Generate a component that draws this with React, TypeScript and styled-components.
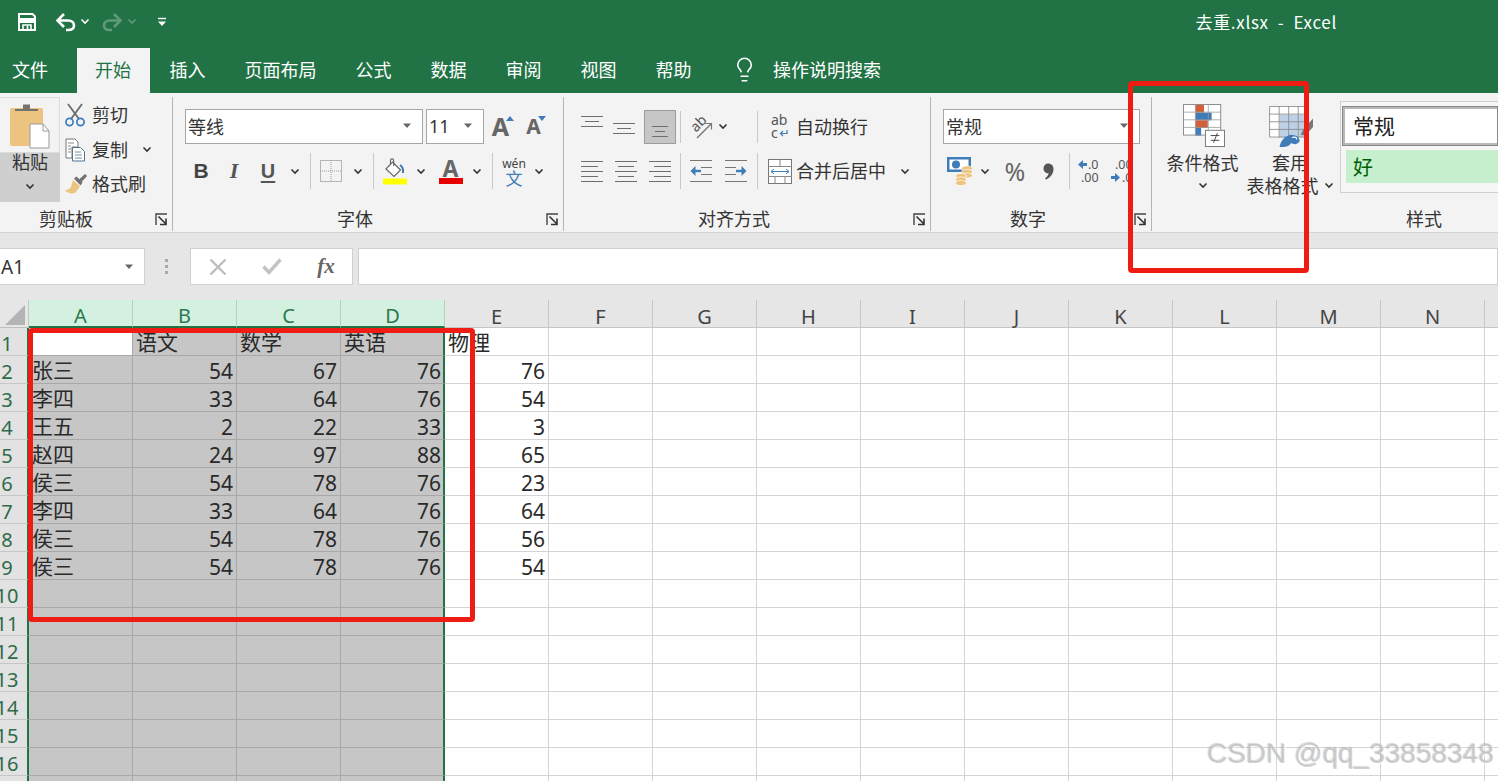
import React from "react";
import styled, { createGlobalStyle } from "styled-components";
import { Lightbulb } from "lucide-react";

const Global = createGlobalStyle`
  html, body { margin: 0; padding: 0; background: #fff; overflow: hidden; }
  body { font-family: "Noto Sans CJK SC", "Noto Sans", sans-serif; }
`;

const GREEN = "#217346";
const INK = "#333";
const BLUE = "#3f7cb8";
const CJK = `"Noto Sans CJK SC", sans-serif`;
const LATIN = `"Noto Sans", "Noto Sans CJK SC", sans-serif`;

const Page = styled.div`
  position: relative;
  width: 1498px;
  height: 781px;
  overflow: hidden;
  display: flex;
  flex-direction: column;
`;

/* title bar */
const TitleBar = styled.header`
  height: 48px;
  flex: none;
  background: ${GREEN};
  display: flex;
  align-items: center;
  padding: 0 161px 5px 17px;
  box-sizing: border-box;
`;
const Quick = styled.span<{ $ml?: number; $dim?: boolean }>`
  display: inline-flex;
  margin-left: ${(p) => p.$ml ?? 0}px;
  opacity: ${(p) => (p.$dim ? 0.28 : 1)};
`;
const Title = styled.div`
  margin-left: auto;
  color: #fff;
  font-size: 17px;
  letter-spacing: 0.7px;
  white-space: pre;
  font-family: ${CJK};
`;

/* tabs */
const Tabs = styled.nav`
  height: 45px;
  flex: none;
  background: ${GREEN};
  display: flex;
  align-items: stretch;
  padding-left: 12px;
`;
const Tab = styled.div<{ $active?: boolean; $first?: boolean }>`
  display: flex;
  align-items: center;
  padding: ${(p) => (p.$first ? "0 29px 0 0" : p.$active ? "0 19px 0 18px" : "0 19.5px")};
  background: ${(p) => (p.$active ? "#f3f3f3" : "transparent")};
  color: ${(p) => (p.$active ? GREEN : "#fff")};
  font-size: 18px;
  padding-bottom: 3px;
  white-space: nowrap;
`;
const Search = styled.div`
  display: flex;
  align-items: center;
  gap: 15px;
  margin-left: 20px;
  color: #fff;
  font-size: 18px;
  padding-bottom: 3px;
  white-space: nowrap;
`;

/* ribbon */
const Ribbon = styled.section`
  height: 140px;
  flex: none;
  box-sizing: border-box;
  background: #f3f3f3;
  border-bottom: 1px solid #d4d4d4;
  display: flex;
  overflow: hidden;
  color: ${INK};
`;
const Group = styled.div<{ $w: number; $last?: boolean }>`
  width: ${(p) => p.$w}px;
  flex: none;
  box-sizing: border-box;
  height: 134px;
  margin-top: 4px;
  display: flex;
  flex-direction: column;
  border-right: ${(p) => (p.$last ? "none" : "1px solid #b4b4b4")};
`;
const GroupBody = styled.div`
  flex: 1;
  min-height: 0;
`;
const GroupBodyRow = styled.div`
  flex: 1;
  min-height: 0;
  display: flex;
`;
const LabelRow = styled.div<{ $left: number }>`
  height: 26px;
  flex: none;
  display: flex;
  align-items: center;
  padding-left: ${(p) => p.$left}px;
  padding-right: 4px;
  font-size: 18px;
  white-space: nowrap;
`;
const LauncherBox = styled.span`
  margin-left: auto;
  display: inline-flex;
  margin-top: 3px;
`;
const Row = styled.div<{ $top: number; $left: number; $h?: number }>`
  display: flex;
  align-items: center;
  height: ${(p) => p.$h ?? 35}px;
  margin-top: ${(p) => p.$top}px;
  padding-left: ${(p) => p.$left}px;
`;
const Slot = styled.span<{ $w: number; $ml?: number }>`
  flex: none;
  width: ${(p) => p.$w}px;
  margin-left: ${(p) => p.$ml ?? 0}px;
  display: inline-flex;
  justify-content: center;
  align-items: center;
`;
const ActiveSlot = styled(Slot)`
  height: 34px;
  background: #c6c6c6;
  border: 1px solid #9c9c9c;
  box-sizing: border-box;
`;
const Sep = styled.span<{ $ml?: number }>`
  flex: none;
  width: 1px;
  height: 32px;
  background: #c8c8c8;
  margin-left: ${(p) => p.$ml ?? 0}px;
`;
const Tall = styled(Sep)`
  height: 36px;
`;
const RowText = styled.span<{ $ml?: number }>`
  font-size: 18px;
  white-space: nowrap;
  margin-left: ${(p) => p.$ml ?? 0}px;
  margin-top: -2px;
`;
const Combo = styled.div<{ $w: number; $ml?: number }>`
  width: ${(p) => p.$w}px;
  margin-left: ${(p) => p.$ml ?? 0}px;
  height: 35px;
  box-sizing: border-box;
  background: #fff;
  border: 1px solid #a6a6a6;
  display: flex;
  align-items: center;
  justify-content: space-between;
  padding: 0 10px 2px 2px;
  font-size: 18px;
  flex: none;
`;
const ComboNum = styled.span`
  font-family: ${LATIN};
`;
const GrowA = styled.span<{ $size: number }>`
  font-family: ${LATIN};
  font-weight: 700;
  font-size: ${(p) => p.$size}px;
  color: #666;
  line-height: 1;
`;
const Tri = styled.span<{ $down?: boolean }>`
  width: 0;
  height: 0;
  border-left: 4px solid transparent;
  border-right: 4px solid transparent;
  ${(p) => (p.$down ? `border-top: 5px solid ${BLUE};` : `border-bottom: 5px solid ${BLUE};`)}
  margin-bottom: 16px;
  margin-left: -3px;
`;
const FontB = styled.span`
  font-family: "Liberation Sans", sans-serif;
  font-weight: 700;
  font-size: 21px;
  color: #444;
`;
const FontI = styled.span`
  font-family: "Liberation Serif", serif;
  font-style: italic;
  font-weight: 700;
  font-size: 22px;
  color: #555;
`;
const FontU = styled.span`
  font-family: "Liberation Sans", sans-serif;
  font-size: 20px;
  font-weight: 700;
  color: #555;
  text-decoration: underline;
  text-underline-offset: 3px;
  text-decoration-thickness: 1.5px;
`;
const ColorA = styled.span<{ $bar: string }>`
  display: inline-flex;
  flex-direction: column;
  align-items: center;
  font-family: ${LATIN};
  font-weight: 700;
  font-size: 23px;
  line-height: 20px;
  color: #666;
  &::after {
    content: "";
    width: 24px;
    height: 6px;
    background: ${(p) => p.$bar};
  }
`;
const Phonetic = styled.span`
  display: inline-flex;
  flex-direction: column;
  align-items: center;
  color: ${BLUE};
  font-size: 17px;
  line-height: 15px;
`;
const PhoneticTop = styled.span`
  font-family: ${LATIN};
  font-size: 12px;
  line-height: 12px;
  color: #444;
`;
const Percent = styled.span`
  font-family: ${LATIN};
  font-size: 25px;
  color: #666;
`;

/* clipboard */
const ClipRow = styled.div`
  flex: 1;
  display: flex;
`;
const Paste = styled.div`
  width: 60px;
  height: 105px;
  flex: none;
  display: flex;
  flex-direction: column;
  box-sizing: border-box;
`;
const PasteTop = styled.div`
  height: 56px;
  flex: none;
  box-sizing: border-box;
  border: 1px solid #dcdcdc;
  border-left: none;
  display: flex;
  justify-content: center;
  padding-top: 5px;
`;
const PasteBottom = styled.div`
  flex: 1;
  background: #cfcfcf;
  display: flex;
  flex-direction: column;
  align-items: center;
  font-size: 18px;
  line-height: 22px;
  gap: 11px;
`;
const PasteLabel = styled.span`
  margin-top: -3px;
`;
const ClipList = styled.div`
  display: flex;
  flex-direction: column;
  margin-top: 1px;
`;
const ClipItem = styled.div`
  height: 34.5px;
  display: flex;
  align-items: center;
  font-size: 18px;
  white-space: nowrap;
`;

/* styles group */
const BigBtn = styled.div<{ $w: number; $ml?: number }>`
  width: ${(p) => p.$w}px;
  margin-left: ${(p) => p.$ml ?? 0}px;
  flex: none;
  display: flex;
  flex-direction: column;
  align-items: center;
  font-size: 18px;
  line-height: 23px;
  white-space: nowrap;
  padding-top: 7px;
`;
const BigIcon = styled.div<{ $ml: number }>`
  height: 44px;
  display: flex;
  align-items: flex-end;
  margin: 0 0 3px ${(p) => p.$ml}px;
`;
const CaretLine = styled.div`
  height: 23px;
  display: flex;
  align-items: center;
  gap: 5px;
`;
const Gallery = styled.div`
  flex: 1;
  margin: 4px 0 0 5px;
  height: 92px;
  box-sizing: border-box;
  border: 1px solid #d0d0d0;
  border-right: none;
  background: #f6f6f6;
  padding: 4px 0 0 1px;
  display: flex;
  flex-direction: column;
`;
const StyleNormal = styled.div`
  height: 40px;
  box-sizing: border-box;
  background: #fff;
  border: 3px solid #b8b8b8;
  outline: 1px solid #888;
  outline-offset: -1px;
  border-right: none;
  font-size: 21px;
  display: flex;
  align-items: center;
  padding: 0 0 2px 8px;
  color: #222;
`;
const StyleGood = styled.div`
  height: 33px;
  margin: 4px 0 0 4px;
  background: #c6efce;
  color: #006100;
  font-size: 20px;
  display: flex;
  align-items: center;
  padding-left: 7px;
`;

/* formula bar */
const FormulaStrip = styled.div`
  height: 67px;
  flex: none;
  box-sizing: border-box;
  background: #e6e6e6;
  padding-top: 15px;
  display: flex;
  align-items: flex-start;
`;
const FBox = styled.div<{ $w?: number; $ml?: number }>`
  height: 37px;
  box-sizing: border-box;
  width: ${(p) => (p.$w ? `${p.$w}px` : "auto")};
  flex: ${(p) => (p.$w ? "none" : "1")};
  margin-left: ${(p) => p.$ml ?? 0}px;
  background: #fff;
  border: 1px solid #d0d0d0;
  display: flex;
  align-items: center;
`;
const NameBox = styled(FBox)`
  border-left: none;
  justify-content: space-between;
  font-family: ${LATIN};
  font-size: 19px;
  padding: 0 10px 0 1px;
  color: #333;
`;
const Dots = styled.div`
  margin-left: 20px;
  width: 3px;
  height: 37px;
  flex: none;
  display: flex;
  flex-direction: column;
  justify-content: center;
  gap: 3px;
  span {
    display: block;
    height: 3px;
    background: #a8a8a8;
  }
`;
const Fx = styled.span`
  font-family: "Liberation Serif", serif;
  font-style: italic;
  font-weight: 700;
  font-size: 21px;
  color: #666;
`;

/* sheet */
const Sheet = styled.div`
  display: grid;
  grid-template-columns: 29px repeat(15, 104px);
  grid-auto-rows: 28px;
  flex: none;
`;
const Corner = styled.div`
  background: #e6e6e6;
  border-right: 1px solid #c6c6c6;
  border-bottom: 1px solid #bdbdbd;
  box-sizing: border-box;
  display: flex;
  align-items: flex-end;
  justify-content: flex-end;
  padding: 0 3px 2px 0;
`;
const ColHead = styled.div<{ $sel?: boolean }>`
  box-sizing: border-box;
  background: ${(p) => (p.$sel ? "#d3f0e0" : "#e6e6e6")};
  color: ${(p) => (p.$sel ? "#2b7a50" : "#444")};
  border-right: 1px solid ${(p) => (p.$sel ? "#b5cfc0" : "#c6c6c6")};
  border-bottom: ${(p) => (p.$sel ? `2px solid ${GREEN}` : "1px solid #c6c6c6")};
  font-family: ${LATIN};
  font-size: 20px;
  display: flex;
  align-items: center;
  justify-content: center;
  padding-top: 5px;
`;
const RowHead = styled.div`
  box-sizing: border-box;
  background: #e2e2e2;
  color: #2f6b4a;
  border-right: 2px solid ${GREEN};
  border-bottom: 1px solid #c6c6c6;
  font-family: ${LATIN};
  font-size: 20px;
  display: flex;
  align-items: center;
  justify-content: center;
  padding-right: 13px;
  padding-top: 3px;
  overflow: visible;
  white-space: nowrap;
`;
const Cell = styled.div<{ $sel?: boolean; $white?: boolean; $num?: boolean; $edge?: boolean }>`
  box-sizing: border-box;
  background: ${(p) => (p.$sel && !p.$white ? "#c6c6c6" : "#fff")};
  border-right: ${(p) =>
    p.$edge ? `2px solid ${GREEN}` : `1px solid ${p.$sel ? "#a8a8a8" : "#d4d4d4"}`};
  border-bottom: 1px solid ${(p) => (p.$sel ? "#a8a8a8" : "#d4d4d4")};
  font-family: ${(p) => (p.$num ? LATIN : CJK)};
  font-size: 21px;
  color: #2a2a2a;
  display: flex;
  align-items: center;
  justify-content: ${(p) => (p.$num ? "flex-end" : "flex-start")};
  padding: ${(p) => (p.$num ? `4px ${p.$edge ? 2 : 3}px 0 0` : "0 0 0 3px")};
  white-space: nowrap;
  overflow: visible;
  line-height: 1;
`;

/* annotations lying over the screenshot */
const RedBox = styled.div<{ $x: number; $y: number; $w: number; $h: number }>`
  position: absolute;
  left: ${(p) => p.$x}px;
  top: ${(p) => p.$y}px;
  width: ${(p) => p.$w}px;
  height: ${(p) => p.$h}px;
  box-sizing: border-box;
  border: 5px solid #ee1c12;
  border-radius: 4px;
  pointer-events: none;
`;
const Watermark = styled.div`
  position: absolute;
  right: 4px;
  top: 738px;
  font-family: "Liberation Sans", sans-serif;
  font-size: 28px;
  color: rgba(190, 190, 190, 0.7);
  text-shadow: -1px -1px 1px rgba(140, 140, 140, 0.35), 1px 1px 1px rgba(255, 255, 255, 0.9);
  white-space: nowrap;
`;

/* icons */
const Caret = ({ c = "#333", o = 1 }: { c?: string; o?: number }) => (
  <svg width="10" height="7" viewBox="0 0 10 7" opacity={o}>
    <path d="M1.5 1.5 5 5l3.5-3.5" fill="none" stroke={c} strokeWidth="1.6" />
  </svg>
);
const DropTri = () => (
  <svg width="10" height="6" viewBox="0 0 10 6">
    <path d="M1 0.5h8L5 5z" fill="#666" />
  </svg>
);
const SaveIcon = () => (
  <svg width="20" height="20" viewBox="0 0 20 20" fill="none">
    <path d="M2 2h13.5L18 4.5V18H2z" stroke="#fff" strokeWidth="2" />
    <path d="M2 8.5h16" stroke="#fff" strokeWidth="5" />
    <path d="M6 18v-5h8v5M10.5 14v3" stroke="#fff" strokeWidth="1.6" />
  </svg>
);
const Undo = ({ flip }: { flip?: boolean }) => (
  <svg width="22" height="20" viewBox="0 0 22 20" fill="none" style={flip ? { transform: "scaleX(-1)" } : undefined}>
    <path d="M2.5 8.5H13c4 0 6 2.3 6 5s-2 4.5-6 4.5h-2" stroke="#fff" strokeWidth="2.6" />
    <path d="M9 2 2.5 8.5 9 15" stroke="#fff" strokeWidth="2.6" />
  </svg>
);
const Customize = () => (
  <svg width="10" height="10" viewBox="0 0 10 10">
    <path d="M1 1.5h8" stroke="#fff" strokeWidth="1.4" />
    <path d="M1 4.5h8L5 9z" fill="#fff" />
  </svg>
);
const PasteIcon = () => (
  <svg width="42" height="46" viewBox="0 0 42 46">
    <rect x="1" y="5" width="33" height="38" rx="2" fill="#edc47f" />
    <path d="M6 8V6h8V1.5h7V6h8v2z" fill="#76726d" />
    <path d="M21 21h13l6 7v17H21z" fill="#fff" stroke="#9a9a9a" />
    <path d="M34 21v7h6" fill="none" stroke="#9a9a9a" />
  </svg>
);
const Scissors = () => (
  <svg width="22" height="24" viewBox="0 0 22 24" fill="none">
    <path d="M4 1 15 16M18 1 7 16" stroke="#6b6b6b" strokeWidth="1.8" />
    <circle cx="5.5" cy="19" r="3.6" stroke={BLUE} strokeWidth="1.7" />
    <circle cx="16.5" cy="19" r="3.6" stroke={BLUE} strokeWidth="1.7" />
  </svg>
);
const CopyIcon = () => (
  <svg width="21" height="24" viewBox="0 0 21 24" fill="none">
    <path d="M1 1h9l3 3v5H7v11H1z" stroke="#777" fill="#fff" />
    <path d="M3 5h6M3 8h3M3 11h3M3 14h3" stroke="#8b8b8b" />
    <path d="M7.5 9.5h8l4 4v9.5h-12z" stroke="#55728f" fill="#fff" />
    <path d="M10 14h6M10 17h7M10 20h7" stroke="#7d8ea0" />
  </svg>
);
const BrushIcon = () => (
  <svg width="24" height="22" viewBox="0 0 24 22">
    <path d="M9 7 16 13.500 11 20C7 21 3 20 1 17c3 0 5-1 6-3z" fill="#edc47f" />
    <path d="M10 5.500 12.500 3.500 18.500 9.500 16.500 12.500z" fill="#6f6f6f" />
    <path d="M15 6.500 21 1l2 2-5.500 6z" fill="#6f6f6f" />
  </svg>
);
const Launcher = () => (
  <svg width="13" height="13" viewBox="0 0 13 13" fill="none">
    <path d="M1 12V1h11" stroke="#444" strokeWidth="1.4" />
    <path d="M3.5 3.5 11 11M11 5.5V11.5H5" stroke="#333" strokeWidth="1.6" />
  </svg>
);
const BorderIcon = () => (
  <svg width="22" height="22" viewBox="0 0 22 22" fill="none">
    <rect x="0.5" y="0.5" width="21" height="21" stroke="#777" strokeDasharray="1 1" />
    <path d="M11 0v22M0 11h22" stroke="#999" strokeDasharray="1 1" />
  </svg>
);
const FillIcon = () => (
  <svg width="26" height="27" viewBox="0 0 26 27" fill="none">
    <path d="M10.5 4 18.5 12 12 18.5 4 11z" fill="#fff" stroke="#666" strokeWidth="1.2" />
    <path d="M8.5 6V2.5a1.6 1.6 0 0 1 3.2 0V8" stroke="#666" strokeWidth="1.1" />
    <path d="M18 7c2.500 1.500 3.500 4 3 8" stroke={BLUE} strokeWidth="2" />
    <rect x="1" y="20.500" width="24" height="6" fill="#ffff00" />
  </svg>
);
const AlignLines = ({ rows }: { rows: [number, number, number][] }) => (
  <svg width="24" height="32" viewBox="0 0 24 32" fill="none">
    {rows.map(([x1, x2, y], i) => (
      <path key={i} d={`M${x1} ${y}.5H${x2}`} stroke="#6e6e6e" />
    ))}
  </svg>
);
const Orient = () => (
  <svg width="26" height="26" viewBox="0 0 26 26" fill="none" style={{ overflow: "visible" }}>
    <text x="9" y="14" fontSize="14" textAnchor="middle" fill="#555" fontFamily="Noto Sans, sans-serif" transform="rotate(-45 9 10)">ab</text>
    <path d="M7 24 21 10" stroke="#777" strokeWidth="1.5" />
    <path d="M15.500 9.500h6v6" stroke="#777" strokeWidth="1.2" />
  </svg>
);
const WrapIcon = () => (
  <svg width="20" height="28" viewBox="0 0 20 28" fill="none" style={{ overflow: "visible" }}>
    <text x="1" y="12" fontSize="14" fill="#555" fontFamily="Noto Sans, sans-serif">ab</text>
    <text x="1" y="25" fontSize="14" fill="#555" fontFamily="Noto Sans, sans-serif">c</text>
    <path d="M17 17v3.500h-6M13 18l-2.500 2.500 2.500 2.500" stroke={BLUE} strokeWidth="1.2" />
  </svg>
);
const Indent = ({ right }: { right?: boolean }) => (
  <svg width="24" height="24" viewBox="0 0 24 24" fill="none" style={right ? { transform: "scaleX(-1)" } : undefined}>
    <path d="M1 1.500h22M12 8.500h11M12 15.500h11M1 22.500h22" stroke="#777" />
    <path d="M12 12H5" stroke={BLUE} strokeWidth="2.400" />
    <path d="M6.500 7 1.500 12l5 5z" fill={BLUE} />
  </svg>
);
const MergeIcon = () => (
  <svg width="24" height="25" viewBox="0 0 24 25" fill="none">
    <rect x="0.500" y="0.500" width="23" height="24" fill="#fff" stroke="#777" />
    <path d="M0 7.500h24M0 17.500h24M12 0v7M7 18v7M17 18v7" stroke="#888" />
    <path d="M3 12.500h18" stroke={BLUE} />
    <path d="M6 10 3 12.500 6 15M18 10l3 2.500L18 15" stroke={BLUE} />
  </svg>
);
const Currency = () => (
  <svg width="26" height="30" viewBox="0 0 26 30">
    <rect x="0" y="1" width="24" height="15" fill="#3f7cb8" />
    <rect x="2.500" y="3.500" width="19" height="10" fill="#fff" />
    <circle cx="9" cy="8.500" r="4" fill="#3f7cb8" />
    <g fill="#edc47f" stroke="#fff" strokeWidth=".6">
      <ellipse cx="20" cy="12.500" rx="5.500" ry="2.600" />
      <ellipse cx="20" cy="16" rx="5.500" ry="2.600" />
      <ellipse cx="20" cy="19.500" rx="5.500" ry="2.600" />
      <ellipse cx="14" cy="20" rx="5.500" ry="2.600" />
      <ellipse cx="14" cy="23.500" rx="5.500" ry="2.600" />
      <ellipse cx="14" cy="27" rx="5.500" ry="2.600" />
    </g>
  </svg>
);
const CommaIcon = () => (
  <svg width="11" height="17" viewBox="0 0 11 17">
    <path d="M5 0.500c3.500 0 5.500 2.300 5.500 5.500 0 4.500-3 8.500-7.500 10.500L2 15.500c2-1.500 3.300-3.200 3.700-5.200C2.800 10.500.500 8.500.500 5.500.500 2.500 2.500.500 5 .500z" fill="#555" />
  </svg>
);
const DecInc = () => (
  <svg width="24" height="26" viewBox="0 0 24 26" style={{ overflow: "visible" }}>
    <path d="M0 6.500 5 2v3h4v3H5v3z" fill={BLUE} />
    <text x="10" y="11" fontSize="12.500" fill="#555" fontFamily="Noto Sans, sans-serif">.0</text>
    <text x="3" y="24" fontSize="12.500" fill="#555" fontFamily="Noto Sans, sans-serif">.00</text>
  </svg>
);
const DecDec = () => (
  <svg width="24" height="26" viewBox="0 0 24 26" style={{ overflow: "visible" }}>
    <text x="4" y="11" fontSize="12.500" fill="#555" fontFamily="Noto Sans, sans-serif">.00</text>
    <path d="M9 19.500 4 15v3H0v3h4v3z" fill={BLUE} />
    <text x="11" y="24" fontSize="12.500" fill="#555" fontFamily="Noto Sans, sans-serif">.0</text>
  </svg>
);
const CondIcon = () => (
  <svg width="42" height="44" viewBox="0 0 44 46" fill="none">
    <rect x="0.500" y="0.500" width="39" height="32" fill="#fff" />
    <rect x="13" y="1" width="9" height="8" fill="#d0603c" />
    <rect x="13" y="9" width="17" height="8" fill="#3f7cb8" />
    <rect x="13" y="17" width="13" height="8" fill="#d0603c" />
    <rect x="13" y="25" width="6" height="8" fill="#3f7cb8" />
    <rect x="0.500" y="0.500" width="39" height="32" stroke="#8a8a8a" />
    <path d="M0 8.500h40M0 16.500h40M0 24.500h40M13 0v33M26.500 0v33" stroke="#9a9a9a" strokeWidth=".8" />
    <rect x="23.500" y="27.500" width="20" height="17" fill="#fff" stroke="#777" />
    <path d="M29 33h9M29 38h9M36 30.500l-4 10" stroke="#444" />
  </svg>
);
const TableIcon = () => (
  <svg width="46" height="42" viewBox="0 0 48 44" fill="none">
    <rect x="0.500" y="0.500" width="40" height="32" fill="#fff" />
    <rect x="11" y="9" width="30" height="24" fill="#bcd0e6" />
    <path d="M0.500 0.500h40v32h-40zM0 8.500h41M0 16.500h41M0 24.500h41M10.500 0v33M20.500 0v33M30.500 0v33" stroke="#8a8a8a" strokeWidth=".9" />
    <path d="M46 13 36 24l-3 6 5 1 8-9z" fill="#777" />
    <path d="M11 43c1-7 6-12 12-13 5 0 9 3 9 6 0 2-2 4-5 4-2 0-4-2-5 0-1 2-5 3-11 3z" fill="#3f7cb8" />
    <path d="M24 33c3-1 5 0 5 2" stroke="#fff" strokeWidth="1.200" />
  </svg>
);
const CloseX = () => (
  <svg width="18" height="18" viewBox="0 0 18 18"><path d="M1.500 1.500l15 15M16.500 1.500l-15 15" stroke="#bdbdbd" strokeWidth="2.400" /></svg>
);
const Check = () => (
  <svg width="20" height="17" viewBox="0 0 20 17"><path d="M1.500 8.500l5.500 6L18.500 1.500" fill="none" stroke="#c4c4c4" strokeWidth="3.400" /></svg>
);
const CornerTri = () => (
  <svg width="20" height="20" viewBox="0 0 20 20"><path d="M20 0v20H0z" fill="#b4b4b4" /></svg>
);

const COLS = "ABCDEFGHIJKLMNO".split("");
const DATA: string[][] = [
  ["", "语文", "数学", "英语", "物理"],
  ["张三", "54", "67", "76", "76"],
  ["李四", "33", "64", "76", "54"],
  ["王五", "2", "22", "33", "3"],
  ["赵四", "24", "97", "88", "65"],
  ["侯三", "54", "78", "76", "23"],
  ["李四", "33", "64", "76", "64"],
  ["侯三", "54", "78", "76", "56"],
  ["侯三", "54", "78", "76", "54"],
];
const ROW_COUNT = 17;
const TAB_NAMES = ["插入", "页面布局", "公式", "数据", "审阅", "视图", "帮助"];

const isNum = (v: string) => /^\d+$/.test(v);

export default function App() {
  return (
    <Page>
      <Global />
      <TitleBar>
        <Quick><SaveIcon /></Quick>
        <Quick $ml={18}><Undo /></Quick>
        <Quick $ml={3}><Caret c="#fff" /></Quick>
        <Quick $ml={11} $dim><Undo flip /></Quick>
        <Quick $ml={4} $dim><Caret c="#fff" /></Quick>
        <Quick $ml={20}><Customize /></Quick>
        <Title>去重.xlsx  -  Excel</Title>
      </TitleBar>
      <Tabs>
        <Tab $first>文件</Tab>
        <Tab $active>开始</Tab>
        {TAB_NAMES.map((t) => <Tab key={t}>{t}</Tab>)}
        <Search><Lightbulb size={27} strokeWidth={1.4} />操作说明搜索</Search>
      </Tabs>
      <Ribbon>
        <Group $w={173}>
          <ClipRow>
            <Paste>
              <PasteTop><PasteIcon /></PasteTop>
              <PasteBottom><PasteLabel>粘贴</PasteLabel><Caret /></PasteBottom>
            </Paste>
            <ClipList>
              <ClipItem><Slot $w={22} $ml={4}><Scissors /></Slot><RowText $ml={6}>剪切</RowText></ClipItem>
              <ClipItem><Slot $w={22} $ml={4}><CopyIcon /></Slot><RowText $ml={6}>复制</RowText><Slot $w={10} $ml={14}><Caret /></Slot></ClipItem>
              <ClipItem><Slot $w={24} $ml={4}><BrushIcon /></Slot><RowText $ml={4}>格式刷</RowText></ClipItem>
            </ClipList>
          </ClipRow>
          <LabelRow $left={39}>剪贴板<LauncherBox><Launcher /></LauncherBox></LabelRow>
        </Group>

        <Group $w={391}>
          <GroupBody>
            <Row $top={12} $left={12}>
              <Combo $w={238}>等线<DropTri /></Combo>
              <Combo $w={58} $ml={3}><ComboNum>11</ComboNum><DropTri /></Combo>
              <Slot $w={26} $ml={6}><GrowA $size={25}>A</GrowA><Tri /></Slot>
              <Slot $w={24} $ml={8}><GrowA $size={21}>A</GrowA><Tri $down /></Slot>
            </Row>
            <Row $top={9} $left={12} $h={36}>
              <Slot $w={32}><FontB>B</FontB></Slot>
              <Slot $w={34}><FontI>I</FontI></Slot>
              <Slot $w={34}><FontU>U</FontU></Slot>
              <Slot $w={20}><Caret /></Slot>
              <Tall $ml={5} />
              <Slot $w={28} $ml={6}><BorderIcon /></Slot>
              <Slot $w={26}><Caret /></Slot>
              <Tall $ml={2} />
              <Slot $w={36} $ml={3}><FillIcon /></Slot>
              <Slot $w={16}><Caret /></Slot>
              <Slot $w={43}><ColorA $bar="#e60000">A</ColorA></Slot>
              <Slot $w={10}><Caret /></Slot>
              <Tall $ml={10} />
              <Slot $w={22} $ml={10}><Phonetic><PhoneticTop>wén</PhoneticTop>文</Phonetic></Slot>
              <Slot $w={10} $ml={9}><Caret /></Slot>
            </Row>
          </GroupBody>
          <LabelRow $left={164}>字体<LauncherBox><Launcher /></LauncherBox></LabelRow>
        </Group>

        <Group $w={367}>
          <GroupBody>
            <Row $top={12} $left={16}>
              <Slot $w={24}><AlignLines rows={[[1, 23, 5], [5, 19, 10], [1, 23, 15]]} /></Slot>
              <Slot $w={24} $ml={8}><AlignLines rows={[[1, 23, 12], [5, 19, 17], [1, 23, 22]]} /></Slot>
              <ActiveSlot $w={32} $ml={8}><AlignLines rows={[[4, 20, 15], [7, 17, 20], [4, 20, 25]]} /></ActiveSlot>
              <Sep $ml={4} />
              <Slot $w={26} $ml={9}><Orient /></Slot>
              <Slot $w={10} $ml={2}><Caret /></Slot>
              <Sep $ml={29} />
              <Slot $w={20} $ml={12}><WrapIcon /></Slot>
              <RowText $ml={6}>自动换行</RowText>
            </Row>
            <Row $top={9} $left={11} $h={36}>
              <Slot $w={34}><AlignLines rows={[[1, 23, 6], [1, 18, 11], [1, 23, 16], [1, 18, 21], [1, 23, 26]]} /></Slot>
              <Slot $w={34}><AlignLines rows={[[1, 23, 6], [4, 20, 11], [1, 23, 16], [4, 20, 21], [1, 23, 26]]} /></Slot>
              <Slot $w={34}><AlignLines rows={[[1, 23, 6], [6, 23, 11], [1, 23, 16], [6, 23, 21], [1, 23, 26]]} /></Slot>
              <Tall $ml={3} />
              <Slot $w={24} $ml={8}><Indent /></Slot>
              <Slot $w={24} $ml={11}><Indent right /></Slot>
              <Tall $ml={9} />
              <Slot $w={24} $ml={10}><MergeIcon /></Slot>
              <RowText $ml={4}>合并后居中</RowText>
              <Slot $w={10} $ml={14}><Caret /></Slot>
            </Row>
          </GroupBody>
          <LabelRow $left={134}>对齐方式<LauncherBox><Launcher /></LauncherBox></LabelRow>
        </Group>

        <Group $w={221}>
          <GroupBody>
            <Row $top={12} $left={12}>
              <Combo $w={197}>常规<DropTri /></Combo>
            </Row>
            <Row $top={9} $left={16} $h={36}>
              <Slot $w={26}><Currency /></Slot>
              <Slot $w={10} $ml={7}><Caret /></Slot>
              <Slot $w={30} $ml={10}><Percent>%</Percent></Slot>
              <Slot $w={36}><CommaIcon /></Slot>
              <Tall $ml={3} />
              <Slot $w={24} $ml={8}><DecInc /></Slot>
              <Slot $w={24} $ml={9}><DecDec /></Slot>
            </Row>
          </GroupBody>
          <LabelRow $left={79}>数字<LauncherBox><Launcher /></LauncherBox></LabelRow>
        </Group>

        <Group $w={346} $last>
          <GroupBodyRow>
            <BigBtn $w={85} $ml={8}>
              <BigIcon $ml={3}><CondIcon /></BigIcon>
              条件格式
              <CaretLine><Caret /></CaretLine>
            </BigBtn>
            <BigBtn $w={90}>
              <BigIcon $ml={4}><TableIcon /></BigIcon>
              套用
              <CaretLine>表格格式<Caret /></CaretLine>
            </BigBtn>
            <Gallery>
              <StyleNormal>常规</StyleNormal>
              <StyleGood>好</StyleGood>
            </Gallery>
          </GroupBodyRow>
          <LabelRow $left={254}>样式</LabelRow>
        </Group>
      </Ribbon>

      <FormulaStrip>
        <NameBox $w={145}>A1<DropTri /></NameBox>
        <Dots><span /><span /><span /></Dots>
        <FBox $w={163} $ml={22}>
          <Slot $w={18} $ml={18}><CloseX /></Slot>
          <Slot $w={20} $ml={35}><Check /></Slot>
          <Slot $w={24} $ml={32}><Fx>fx</Fx></Slot>
        </FBox>
        <FBox $ml={5} />
      </FormulaStrip>

      <Sheet>
        <Corner><CornerTri /></Corner>
        {COLS.map((c, i) => <ColHead key={c} $sel={i < 4}>{c}</ColHead>)}
        {Array.from({ length: ROW_COUNT }, (_, r) => (
          <React.Fragment key={r}>
            <RowHead>{r + 1}</RowHead>
            {COLS.map((c, i) => {
              const v = DATA[r]?.[i] ?? "";
              return (
                <Cell
                  key={c}
                  $sel={i < 4}
                  $edge={i === 3}
                  $white={r === 0 && i === 0}
                  $num={isNum(v)}
                >
                  {v}
                </Cell>
              );
            })}
          </React.Fragment>
        ))}
      </Sheet>

      <RedBox $x={28} $y={328} $w={447} $h={294} />
      <RedBox $x={1128} $y={81} $w={181} $h={192} />
      <Watermark>CSDN @qq_33858348</Watermark>
    </Page>
  );
}
